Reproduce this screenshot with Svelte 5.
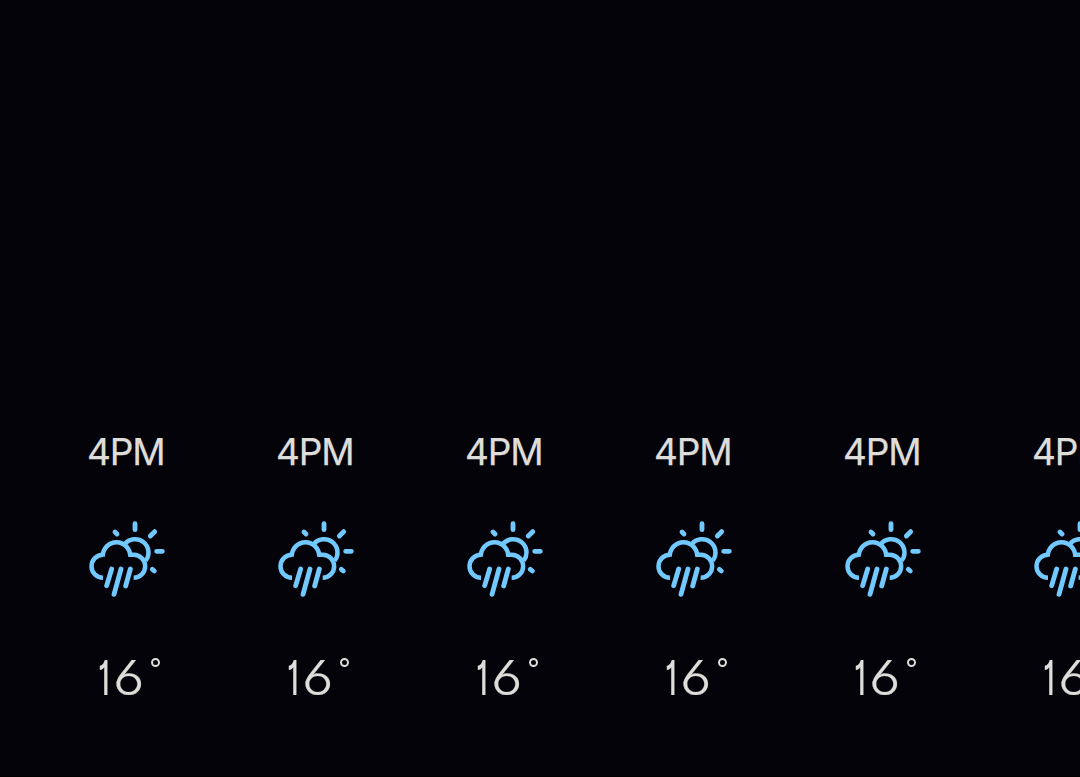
<script>
  const hours = Array.from({ length: 6 }, () => ({ time: '4PM', temp: '16' }));
</script>

<main>
  <div class="hours">
    {#each hours as hour}
      <section class="hour">
        <div class="time">{hour.time}</div>
        <svg class="icon" viewBox="0 0 282 282" aria-hidden="true">
          <path d="M69 197A34.5 34.5 0 0 1 69 128" />
          <path d="M68 134A41.5 43.5 0 0 1 151 134" />
          <path d="M146 128H161A34.5 34.5 0 0 1 161 197" />
          <path d="M134 97A39 39 0 0 1 197 146" />
          <g class="round">
            <path d="M165 35V53M230 118H247M211 72L224 59M105 60L111 66M217 172L223 177" />
            <path d="M95 171L80 221M123 171L102 247M151 171L137 222" />
          </g>
        </svg>
        <div class="temp"><span class="tens">{hour.temp[0]}</span><span class="units">{hour.temp[1]}</span><i></i></div>
      </section>
    {/each}
  </div>
</main>

<style>
  :global(body) {
    background: #040309;
  }

  main {
    box-sizing: border-box;
    width: 1080px;
    height: 777px;
    padding: 430px 0 0 32px;
    overflow: hidden;
    background: #040309;
    border-bottom: 1px solid #000;
    color: #deddd9;
    font-family: Inter, sans-serif;
  }

  .hours {
    display: flex;
  }

  .hour {
    display: flex;
    flex: 0 0 189px;
    flex-direction: column;
    align-items: center;
  }

  .time {
    height: 44px;
    margin-left: -1.5px;
    font-size: 37px;
    line-height: 44px;
    letter-spacing: -1.2px;
    -webkit-text-stroke: 0.25px #deddd9;
  }

  .icon {
    width: 94px;
    height: 94px;
    margin-top: 38px;
    margin-left: 1px;
    fill: none;
    stroke: #71c9ff;
    stroke-width: 13.5;
  }

  .round {
    stroke-width: 14.5;
    stroke-linecap: round;
  }

  .temp {
    display: flex;
    align-self: flex-start;
    margin: 43px 0 0 66px;
    font-size: 48px;
    font-weight: 300;
    line-height: 58px;
    font-feature-settings: 'cv01', 'ss01';
  }

  .temp span {
    transform-origin: left;
    will-change: transform;
  }

  .tens {
    width: 14.5px;
    font-weight: 500;
    transform: scaleX(0.6);
  }

  .units {
    width: 38.5px;
    transform: scaleX(1.14);
    -webkit-text-stroke: 0.2px #deddd9;
  }

  i {
    box-sizing: border-box;
    width: 9px;
    height: 9px;
    margin-top: 9px;
    border: 2px solid #deddd9;
    border-radius: 50%;
  }
</style>
